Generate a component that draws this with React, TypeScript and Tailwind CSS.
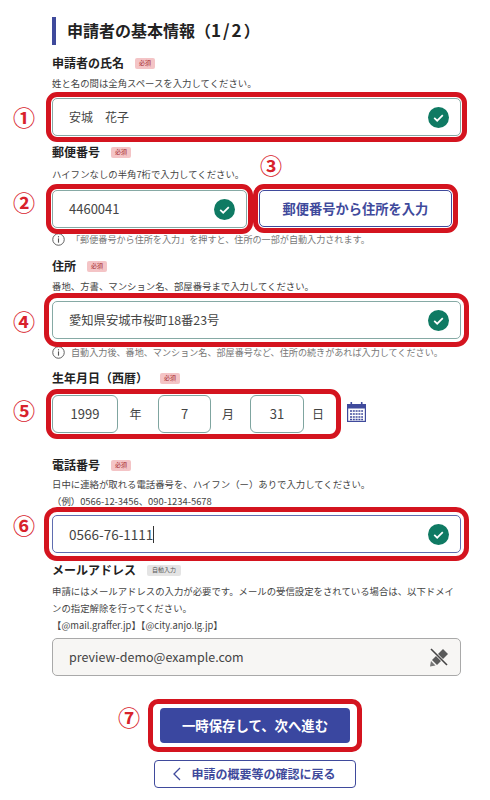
const Check = () => (
  <svg viewBox="0 0 21 21" className="w-[21px] h-[21px] shrink-0">
    <circle cx="10.5" cy="10.5" r="10.5" fill="#0f7a63" />
    <path d="M6.2 10.8l3 2.9 5.6-5.6" fill="none" stroke="#fff" strokeWidth="1.7" />
  </svg>
);

const Info = () => (
  <svg viewBox="0 0 14 14" className="w-[13px] h-[13px] shrink-0">
    <circle cx="7" cy="7" r="6.2" fill="none" stroke="#555" strokeWidth="1" />
    <rect x="6.4" y="5.8" width="1.2" height="4.6" fill="#555" />
    <rect x="6.4" y="3.4" width="1.2" height="1.3" fill="#555" />
  </svg>
);

const Badge = ({ text = "必須", gray = false }: { text?: string; gray?: boolean }) => (
  <span
    className={`h-[11px] rounded-[2px] flex items-center justify-center text-[6px] leading-none ${
      gray ? "w-[34px] bg-[#e4e4e4] text-[#555]" : "w-[20px] bg-[#f4c4c6] text-[#a3232b]"
    }`}
  >
    {text}
  </span>
);

const Label = ({ text, className, children }: { text: string; className?: string; children: React.ReactNode }) => (
  <div className={`flex items-center ${className}`}>
    <h2 className="text-[12px] leading-[18px] font-bold text-[#222]">{text}</h2>
    {children}
  </div>
);

const Mark = ({ text, className }: { text: string; className: string }) => (
  <span className={`absolute text-[22px] leading-none font-bold text-[#d8222c] ${className}`}>{text}</span>
);

const Hint = ({ children, className }: { children: React.ReactNode; className?: string }) => (
  <p className={`text-[9.4px] leading-[17px] text-[#444] ${className}`}>{children}</p>
);

const Note = ({ text, className }: { text: string; className?: string }) => (
  <div className={`flex items-center gap-[6px] text-[9.1px] leading-[14px] text-[#777] whitespace-nowrap ${className}`}>
    <Info />
    <span>{text}</span>
  </div>
);

const TextBox = ({
  value,
  caret = false,
  size = "text-[13px]",
  frame = "outline-offset-[1px]",
}: {
  value: string;
  caret?: boolean;
  size?: string;
  frame?: string;
}) => (
  <div
    className={`h-[38px] rounded-[5px] border bg-white flex items-center justify-between pl-[16px] pr-[11px] text-[#444] outline-[5px] outline-[#d4141f] ${size} ${frame} ${
      caret ? "border-[#5f6db0]" : "border-[#86aaa5]"
    }`}
  >
    <span className="flex items-center">
      {value}
      {caret && <span className="w-px h-[17px] bg-[#333]" />}
    </span>
    <Check />
  </div>
);

const DateBox = ({ value, className }: { value: string; className: string }) => (
  <div className={`h-[38px] rounded-[6px] border border-[#7fa5a0] bg-white flex items-center justify-center text-[13px] text-[#444] ${className}`}>
    {value}
  </div>
);

const App = () => {
  return (
    <main
      className="relative w-[490px] h-[800px] overflow-hidden bg-white pl-[52px] pr-[29px] pt-[17px]"
      style={{ fontFamily: '"Noto Sans CJK JP", "Noto Sans", sans-serif' }}
    >
      <section className="border-l-4 border-[#3f4a9c] h-[28px] pl-[11px] flex items-center">
        <h1 className="text-[16px] font-bold text-[#222] leading-none mb-[3px]">
          申請者の基本情報（<span className="text-[17px] tracking-[2px]">1/2</span>）
        </h1>
      </section>

      <Label text="申請者の氏名" className="mt-[9px] gap-[11px]">
        <Badge />
      </Label>
      <Hint className="mt-[3px]">姓と名の間は全角スペースを入力してください。</Hint>
      <div className="relative mt-[6px]">
        <Mark text="①" className="left-[-39px] top-[7px]" />
        <TextBox value="安城　花子" size="text-[12px]" />
      </div>

      <Label text="郵便番号" className="mt-[7px] gap-[11px]">
        <Badge />
      </Label>
      <Hint className="mt-[5px]">ハイフンなしの半角7桁で入力してください。</Hint>
      <div className="relative mt-[7px] flex gap-[12px] items-start">
        <Mark text="②" className="left-[-39px] top-0" />
        <Mark text="③" className="left-[208px] top-[-37px]" />
        <div className="w-[195px]">
          <TextBox value="4460041" />
        </div>
        <button className="w-[193px] h-[37px] rounded-[5px] bg-white border-[1.5px] border-[#3f4a9c] text-[13.25px] font-bold text-[#3f4a9c] outline-[5px] outline-offset-[1px] outline-[#d4141f]">
          郵便番号から住所を入力
        </button>
      </div>
      <Note text="「郵便番号から住所を入力」を押すと、住所の一部が自動入力されます。" className="mt-[4px]" />

      <Label text="住所" className="mt-[11px] gap-[11px]">
        <Badge />
      </Label>
      <Hint className="mt-[3px]">番地、方書、マンション名、部屋番号まで入力してください。</Hint>
      <div className="relative mt-[6px]">
        <Mark text="④" className="left-[-39px] top-[8px]" />
        <TextBox value="愛知県安城市桜町18番23号" size="text-[12.3px]" frame="outline-offset-[3px]" />
      </div>
      <Note text="自動入力後、番地、マンション名、部屋番号など、住所の続きがあれば入力してください。" className="mt-[6px]" />

      <Label text="生年月日（西暦）" className="mt-[10px] gap-[12px]">
        <Badge />
      </Label>
      <div className="relative mt-[8px] flex items-center">
        <Mark text="⑤" className="left-[-39px] top-[3px]" />
        <div className="flex items-center text-[12px] text-[#444] rounded-[5px] outline-[5px] outline-offset-[1px] outline-[#d4141f]">
          <DateBox value="1999" className="w-[66px]" />
          <span className="w-[40px] text-center pr-[5px]">年</span>
          <DateBox value="7" className="w-[53px]" />
          <span className="w-[39px] text-center pr-[5px]">月</span>
          <DateBox value="31" className="w-[54px]" />
          <span className="w-[31px] text-center pr-[3px]">日</span>
        </div>
        <svg viewBox="0 0 19 20" className="ml-[12px] mb-[5px] w-[19px] h-[20px]">
          <rect x="0.6" y="2.6" width="17.8" height="16.8" fill="#fff" stroke="#3f4a9c" strokeWidth="1.2" />
          <rect x="0" y="2" width="19" height="4.5" fill="#3f4a9c" />
          <rect x="3.5" y="0" width="1.6" height="3.5" fill="#3f4a9c" />
          <rect x="13.9" y="0" width="1.6" height="3.5" fill="#3f4a9c" />
          <path d="M3 9h13M3 12h13M3 15h13M3 17.5h13" stroke="#3f4a9c" strokeWidth="1.4" strokeDasharray="2 0.8" />
        </svg>
      </div>

      <Label text="電話番号" className="mt-[23px] gap-[11px]">
        <Badge />
      </Label>
      <Hint className="mt-[2px]">日中に連絡が取れる電話番号を、ハイフン（ー）ありで入力してください。</Hint>
      <Hint>（例）0566-12-3456、090-1234-5678</Hint>
      <div className="relative mt-[5px]">
        <Mark text="⑥" className="left-[-39px] top-[-2px]" />
        <TextBox value="0566-76-1111" caret size="text-[13.5px]" frame="outline-offset-[3px]" />
      </div>

      <Label text="メールアドレス" className="mt-[8px] gap-[11px]">
        <Badge text="自動入力" gray />
      </Label>
      <Hint className="mt-[4px]">
        申請にはメールアドレスの入力が必要です。メールの受信設定をされている場合は、以下ドメインの指定解除を行ってください。
      </Hint>
      <Hint>【@mail.graffer.jp】【@city.anjo.lg.jp】</Hint>
      <div className="mt-[4px] h-[38px] rounded-[5px] border border-[#a9a9a9] bg-[#f7f6f4] flex items-center justify-between pl-[16px] pr-[11px] text-[12.5px] text-[#444]">
        <span>preview-demo@example.com</span>
        <svg viewBox="0 0 20 20" className="w-[20px] h-[20px]">
          <path d="M1 19.5l1-5.5 4.5 4.5z" fill="#777" />
          <path d="M3 13L14 2l5 5L8 18z" fill="#5a5a5a" />
          <path d="M2 2l16 16" stroke="#f7f6f4" strokeWidth="3" />
          <path d="M2 2l16 16" stroke="#444" strokeWidth="1.6" />
        </svg>
      </div>

      <div className="relative mt-[23px] flex flex-col items-center w-[409px]">
        <Mark text="⑦" className="left-[66px] top-[6px]" />
        <div className="mr-[3px] border-[5px] border-[#d4141f] rounded-[10px] px-[7px] py-[4px]">
          <button className="block w-[190px] h-[35px] rounded-[4px] bg-[#3a47a0] text-white text-[13.4px] font-bold">
            一時保存して、次へ進む
          </button>
        </div>
        <button className="mr-[4px] mt-[8px] w-[202px] h-[28px] rounded-[4px] bg-white border-[1.5px] border-[#3f4a9c] text-[#3f4a9c] text-[12px] font-bold flex items-center justify-center gap-[10px]">
          <svg viewBox="0 0 8 14" className="w-[8px] h-[14px]">
            <path d="M7 1L1 7l6 6" fill="none" stroke="#3f4a9c" strokeWidth="1.3" />
          </svg>
          申請の概要等の確認に戻る
        </button>
      </div>
    </main>
  );
};

export default App;
